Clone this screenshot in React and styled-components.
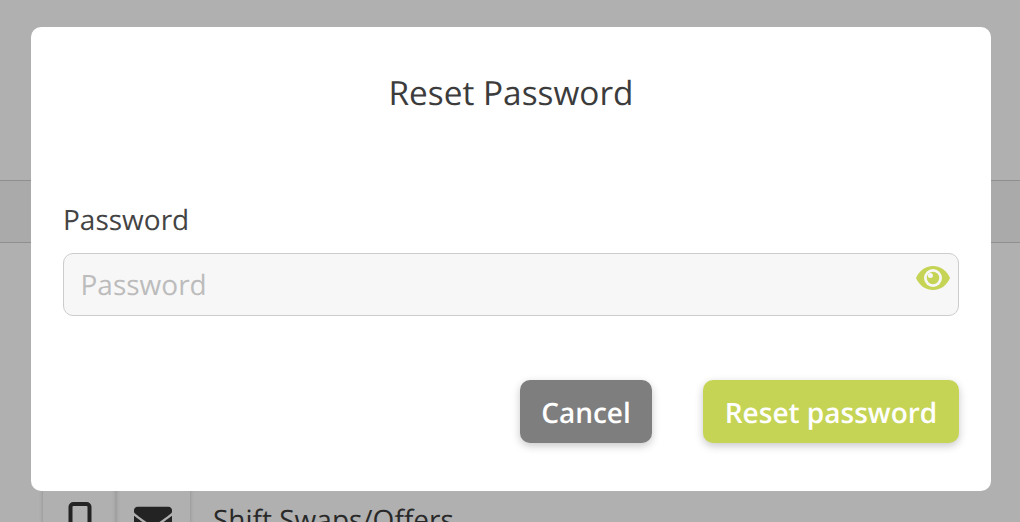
import React from "react";
import styled, { createGlobalStyle } from "styled-components";
import { FaEnvelope } from "react-icons/fa";

const Global = createGlobalStyle`
  html, body { margin: 0; height: 100%; overflow: hidden; background: #fff; }
  body {
    font-family: "Open Sans", "Liberation Sans", sans-serif;
    color: #3c3c3c;
    text-rendering: geometricPrecision;
  }
`;

const Page = styled.div`
  height: 522px;
  overflow: hidden;
  display: flex;
  flex-direction: column;
`;
const Band = styled.div`
  flex: none;
  margin-top: 180px;
  height: 61px;
  background: #f7f7f7;
  border-top: 1px solid #cfcfcf;
  border-bottom: 1px solid #cfcfcf;
`;
const NotificationRow = styled.div`
  flex: none;
  margin-top: 237px;
  padding-left: 43px;
  display: flex;
  align-items: flex-start;
`;
const IconTile = styled.div`
  width: ${(p) => p.$w}px;
  height: 70px;
  border-radius: 6px;
  box-shadow: 0 1px 4px rgba(0, 0, 0, 0.2);
  display: flex;
  justify-content: center;
  padding-top: ${(p) => p.$top}px;
  box-sizing: border-box;
  color: #333;
`;
const RowLabel = styled.span`
  margin-left: 23px;
  padding-top: 21px;
  font-size: 28px;
  line-height: 38px;
  white-space: nowrap;
`;
const Overlay = styled.div`
  position: fixed;
  inset: 0;
  background: rgba(0, 0, 0, 0.31);
  display: flex;
  align-items: flex-start;
  justify-content: center;
  padding: 27px 0 0 2px;
`;
const Modal = styled.div`
  width: 960px;
  height: 464px;
  box-sizing: border-box;
  padding: 42px 32px 0;
  background: #fff;
  border-radius: 10px;
  display: flex;
  flex-direction: column;
`;
const Title = styled.h2`
  margin: 0;
  font-size: 33.4px;
  line-height: 46px;
  font-weight: 400;
  text-align: center;
  color: #3c3c3c;
`;
const Field = styled.div`
  margin-top: 85px;
  display: flex;
  flex-direction: column;
  gap: 13px;
`;
const Label = styled.label`
  font-size: 28px;
  line-height: 40px;
  color: #444;
`;
const InputWrap = styled.div`
  position: relative;
  height: 63px;
`;
const Input = styled.input`
  width: 100%;
  height: 100%;
  box-sizing: border-box;
  padding: 0 60px 0 16.500px;
  background: #f7f7f7;
  border: 1px solid #cccccc;
  border-radius: 10px;
  font: 400 28px "Open Sans", sans-serif;
  text-rendering: geometricPrecision;
  color: #444;
  outline: none;
  &::placeholder { color: #bcbcbc; opacity: 1; }
`;
const EyeButton = styled.span`
  position: absolute;
  top: 13px;
  right: 9px;
  display: flex;
`;
const Actions = styled.div`
  margin-top: 64px;
  display: flex;
  justify-content: flex-end;
  gap: 51px;
`;
const Button = styled.button`
  height: 63px;
  width: ${(p) => p.$w}px;
  border: 0;
  border-radius: 10px;
  background: ${(p) => p.$bg};
  color: #fff;
  font: 600 28px "Open Sans", sans-serif;
  text-rendering: geometricPrecision;
  box-shadow: 0 3px 8px rgba(0, 0, 0, 0.22);
  padding: 2px 0 0;
`;

const Phone = () => (
  <svg width="24" height="40" viewBox="0 0 24 40" fill="none" stroke="currentColor" strokeWidth="4">
    <rect x="2.5" y="2" width="19" height="36" rx="3" />
  </svg>
);

const Eye = () => (
  <svg width="34" height="24" viewBox="0 0 34 24">
    <path d="M0 12C3 5 9 0 17 0S31 5 34 12C31 19 25 24 17 24S3 19 0 12Z" fill="#c5d455" />
    <circle cx="17" cy="12" r="9" fill="#f7f7f7" />
    <circle cx="17" cy="12" r="6.200" fill="#c5d455" />
    <circle cx="14.400" cy="9.400" r="2.500" fill="#f7f7f7" />
  </svg>
);

export default function App() {
  return (
    <>
      <Global />
      <Page>
        <Band />
        <NotificationRow>
          <IconTile $w={73} $top={22}><Phone /></IconTile>
          <IconTile $w={74} $top={22}><FaEnvelope size={38} /></IconTile>
          <RowLabel>Shift Swaps/Offers</RowLabel>
        </NotificationRow>
      </Page>
      <Overlay>
        <Modal>
          <Title>Reset Password</Title>
          <Field>
            <Label>Password</Label>
            <InputWrap>
              <Input placeholder="Password" readOnly />
              <EyeButton><Eye /></EyeButton>
            </InputWrap>
          </Field>
          <Actions>
            <Button $w={132} $bg="#7e7e7e">Cancel</Button>
            <Button $w={256} $bg="#c5d455">Reset password</Button>
          </Actions>
        </Modal>
      </Overlay>
    </>
  );
}
